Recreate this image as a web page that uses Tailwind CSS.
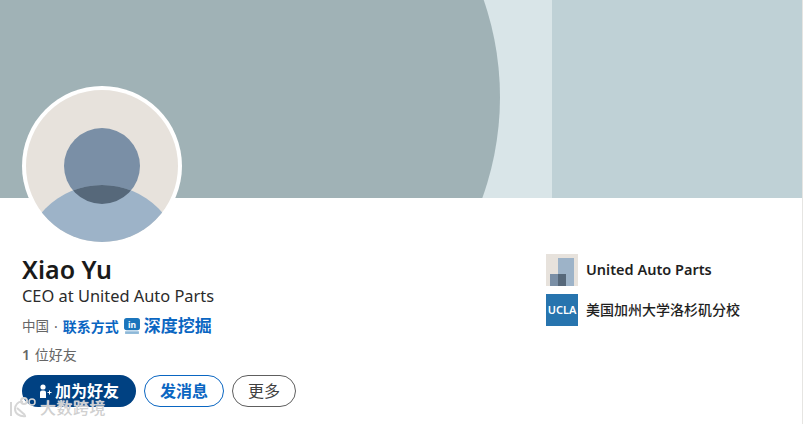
<!DOCTYPE html>
<html lang="zh">

<head>
  <meta charset="utf-8" />
  <title>Xiao Yu</title>
  <script src="https://cdn.jsdelivr.net/npm/@tailwindcss/browser@4"></script>
</head>

<body class="bg-white font-['Noto_Sans','Noto_Sans_CJK_SC',sans-serif] overflow-hidden">
  <div class="relative w-[806px] h-[424px] overflow-hidden">
    <div class="w-[803px] h-full border-r border-[#e6e5e2]">
      <!-- banner -->
      <svg class="block w-[802px] h-[198px]" viewBox="0 0 802 198">
        <rect width="802" height="198" fill="#d9e5e8" />
        <rect x="552" width="250" height="198" fill="#bfd1d6" />
        <circle cx="203" cy="97" r="297" fill="#a0b2b6" />
      </svg>

      <div class="flex justify-between pl-[22px] pr-[62px]">
        <!-- left column -->
        <div class="pt-[56px]">
          <h1 class="text-[25px] leading-[30px] font-semibold text-[#1a1a1a]">Xiao Yu</h1>
          <p class="text-[16.4px] leading-[20px] mt-[2px] text-[#2b2b2b]">CEO at United Auto Parts</p>
          <div class="flex items-center mt-[10px] h-[20px] text-[14px] text-[#666666]">
            <span class="text-[13.5px]">中国</span>
            <span class="mx-[5px]">·</span>
            <span class="font-semibold text-[#0a66c2]">联系方式</span>
            <svg class="ml-[5px] w-[16px] h-[17px]" viewBox="0 0 15 16">
              <rect width="15" height="11.5" rx="2.5" fill="#1b75bc" />
              <rect x="1" y="12.5" width="13" height="2.5" fill="#8db8d8" />
              <text x="7.5" y="9" font-size="8" font-weight="700" text-anchor="middle" fill="#ffffff">in</text>
            </svg>
            <span class="ml-[4px] text-[17px] font-semibold text-[#0a66c2]">深度挖掘</span>
          </div>
          <p class="mt-[10px] text-[14px] leading-[18px] text-[#666666]"><span class="font-semibold">1</span><span class="ml-[1px]"> 位好友</span></p>
          <div class="flex gap-[8px] mt-[11px]">
            <button class="flex items-center justify-center w-[114px] h-[32px] rounded-full bg-[#004182] text-[16px] font-semibold text-white">
              <svg class="mr-[2px] w-[14px] h-[16px]" viewBox="0 0 14 16" fill="#ffffff">
                <circle cx="4" cy="4" r="2.6" />
                <path d="M1 9.5a2 2 0 0 1 2-2h2a2 2 0 0 1 2 2V15H1z" />
                <path d="M10 7.5h1v1.5h1.5v1H11v1.5h-1V10H8.5V9H10z" />
              </svg>
              加为好友
            </button>
            <button class="w-[80px] h-[32px] rounded-full border border-[#0a66c2] text-[16px] font-semibold text-[#0a66c2]">发消息</button>
            <button class="w-[64px] h-[32px] rounded-full border border-[#5e5e5e] text-[16px] text-[#404040]">更多</button>
          </div>
        </div>

        <!-- right column -->
        <div class="flex flex-col gap-[8px] w-[194px] pt-[56px]">
          <div class="flex items-center gap-[8px]">
            <svg class="w-[32px] h-[32px]" viewBox="0 0 32 32">
              <rect width="32" height="32" fill="#e7e2dc" />
              <rect x="12" y="4" width="16" height="28" fill="#9db3c8" />
              <rect x="4" y="20" width="16" height="12" fill="#7a8fa6" />
              <rect x="12" y="20" width="8" height="12" fill="#56687a" />
            </svg>
            <span class="text-[14.5px] font-semibold text-[#1f1f1f]">United Auto Parts</span>
          </div>
          <div class="flex items-center gap-[8px]">
            <div class="flex items-center justify-center w-[32px] h-[32px] bg-[#2774ae] text-[11px] font-semibold text-white">UCLA</div>
            <span class="pb-[2px] text-[14px] font-medium text-[#1f1f1f]">美国加州大学洛杉矶分校</span>
          </div>
        </div>
      </div>
    </div>

    <!-- avatar over the banner -->
    <svg class="absolute left-[22px] top-[86px] w-[160px] h-[160px]" viewBox="0 0 160 160">
      <defs>
        <clipPath id="face"><circle cx="80" cy="80" r="76" /></clipPath>
        <clipPath id="head"><circle cx="80" cy="80" r="38" /></clipPath>
      </defs>
      <circle cx="80" cy="80" r="80" fill="#ffffff" />
      <g clip-path="url(#face)">
        <rect width="160" height="160" fill="#e7e2dc" />
        <circle cx="80" cy="80" r="38" fill="#7a8fa6" />
        <circle cx="80" cy="179" r="80" fill="#9db3c8" />
        <circle cx="80" cy="179" r="80" fill="#56687a" clip-path="url(#head)" />
      </g>
    </svg>

    <!-- watermark -->
    <div class="absolute left-[8px] top-[397px] flex items-center gap-[2px]">
      <svg class="w-[30px] h-[22px]" viewBox="0 0 30 22" fill="none" stroke="#d6d6d6" stroke-width="2">
        <path d="M3 5v14" />
        <path d="M15 5c-5-1-8 3-8 7s4 8 11 7" />
        <path d="M9 11l8 7" />
        <circle cx="16" cy="4" r="3" />
        <circle cx="24" cy="5" r="3" stroke-width="1.5" />
      </svg>
      <span class="text-[16px] leading-[22px] tracking-[0.5px] font-medium text-[#d0d0d0] [text-shadow:0_0_1px_#ffffff]">大数跨境</span>
    </div>
  </div>
</body>

</html>
